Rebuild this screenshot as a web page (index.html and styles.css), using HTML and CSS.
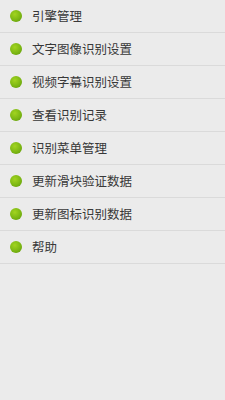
FILE: index.html
```html
<!DOCTYPE html>
<html>
<head>
  <meta charset="utf-8">
  <title>设置</title>
  <link rel="stylesheet" href="styles.css">
</head>
<body>

<ul class="menu">
  <li class="menu-item"><span class="dot"></span>引擎管理</li>
  <li class="menu-item"><span class="dot"></span>文字图像识别设置</li>
  <li class="menu-item"><span class="dot"></span>视频字幕识别设置</li>
  <li class="menu-item"><span class="dot"></span>查看识别记录</li>
  <li class="menu-item"><span class="dot"></span>识别菜单管理</li>
  <li class="menu-item"><span class="dot"></span>更新滑块验证数据</li>
  <li class="menu-item"><span class="dot"></span>更新图标识别数据</li>
  <li class="menu-item"><span class="dot"></span>帮助</li>
</ul>

</body>
</html>
```

FILE: styles.css
```css
body {
  margin: 0;
  padding: 0;
  background: #ebebeb;
  font-family: "Noto Sans CJK SC", "Noto Sans", sans-serif;
  height: 400px;
}

.menu {
  list-style: none;
  margin: 0;
  padding: 0;
}

.menu-item {
  display: flex;
  align-items: center;
  box-sizing: border-box;
  height: 33px;
  padding-left: 10px;
  padding-bottom: 1px;
  font-size: 12.5px;
  color: #383838;
  border-bottom: 1px solid #dadada;
}

.dot {
  width: 12px;
  height: 12px;
  border-radius: 50%;
  margin-right: 10px;
  background: radial-gradient(circle at 40% 35%, #a2d420 0%, #7cb713 55%, #5a9408 100%);
}
```
